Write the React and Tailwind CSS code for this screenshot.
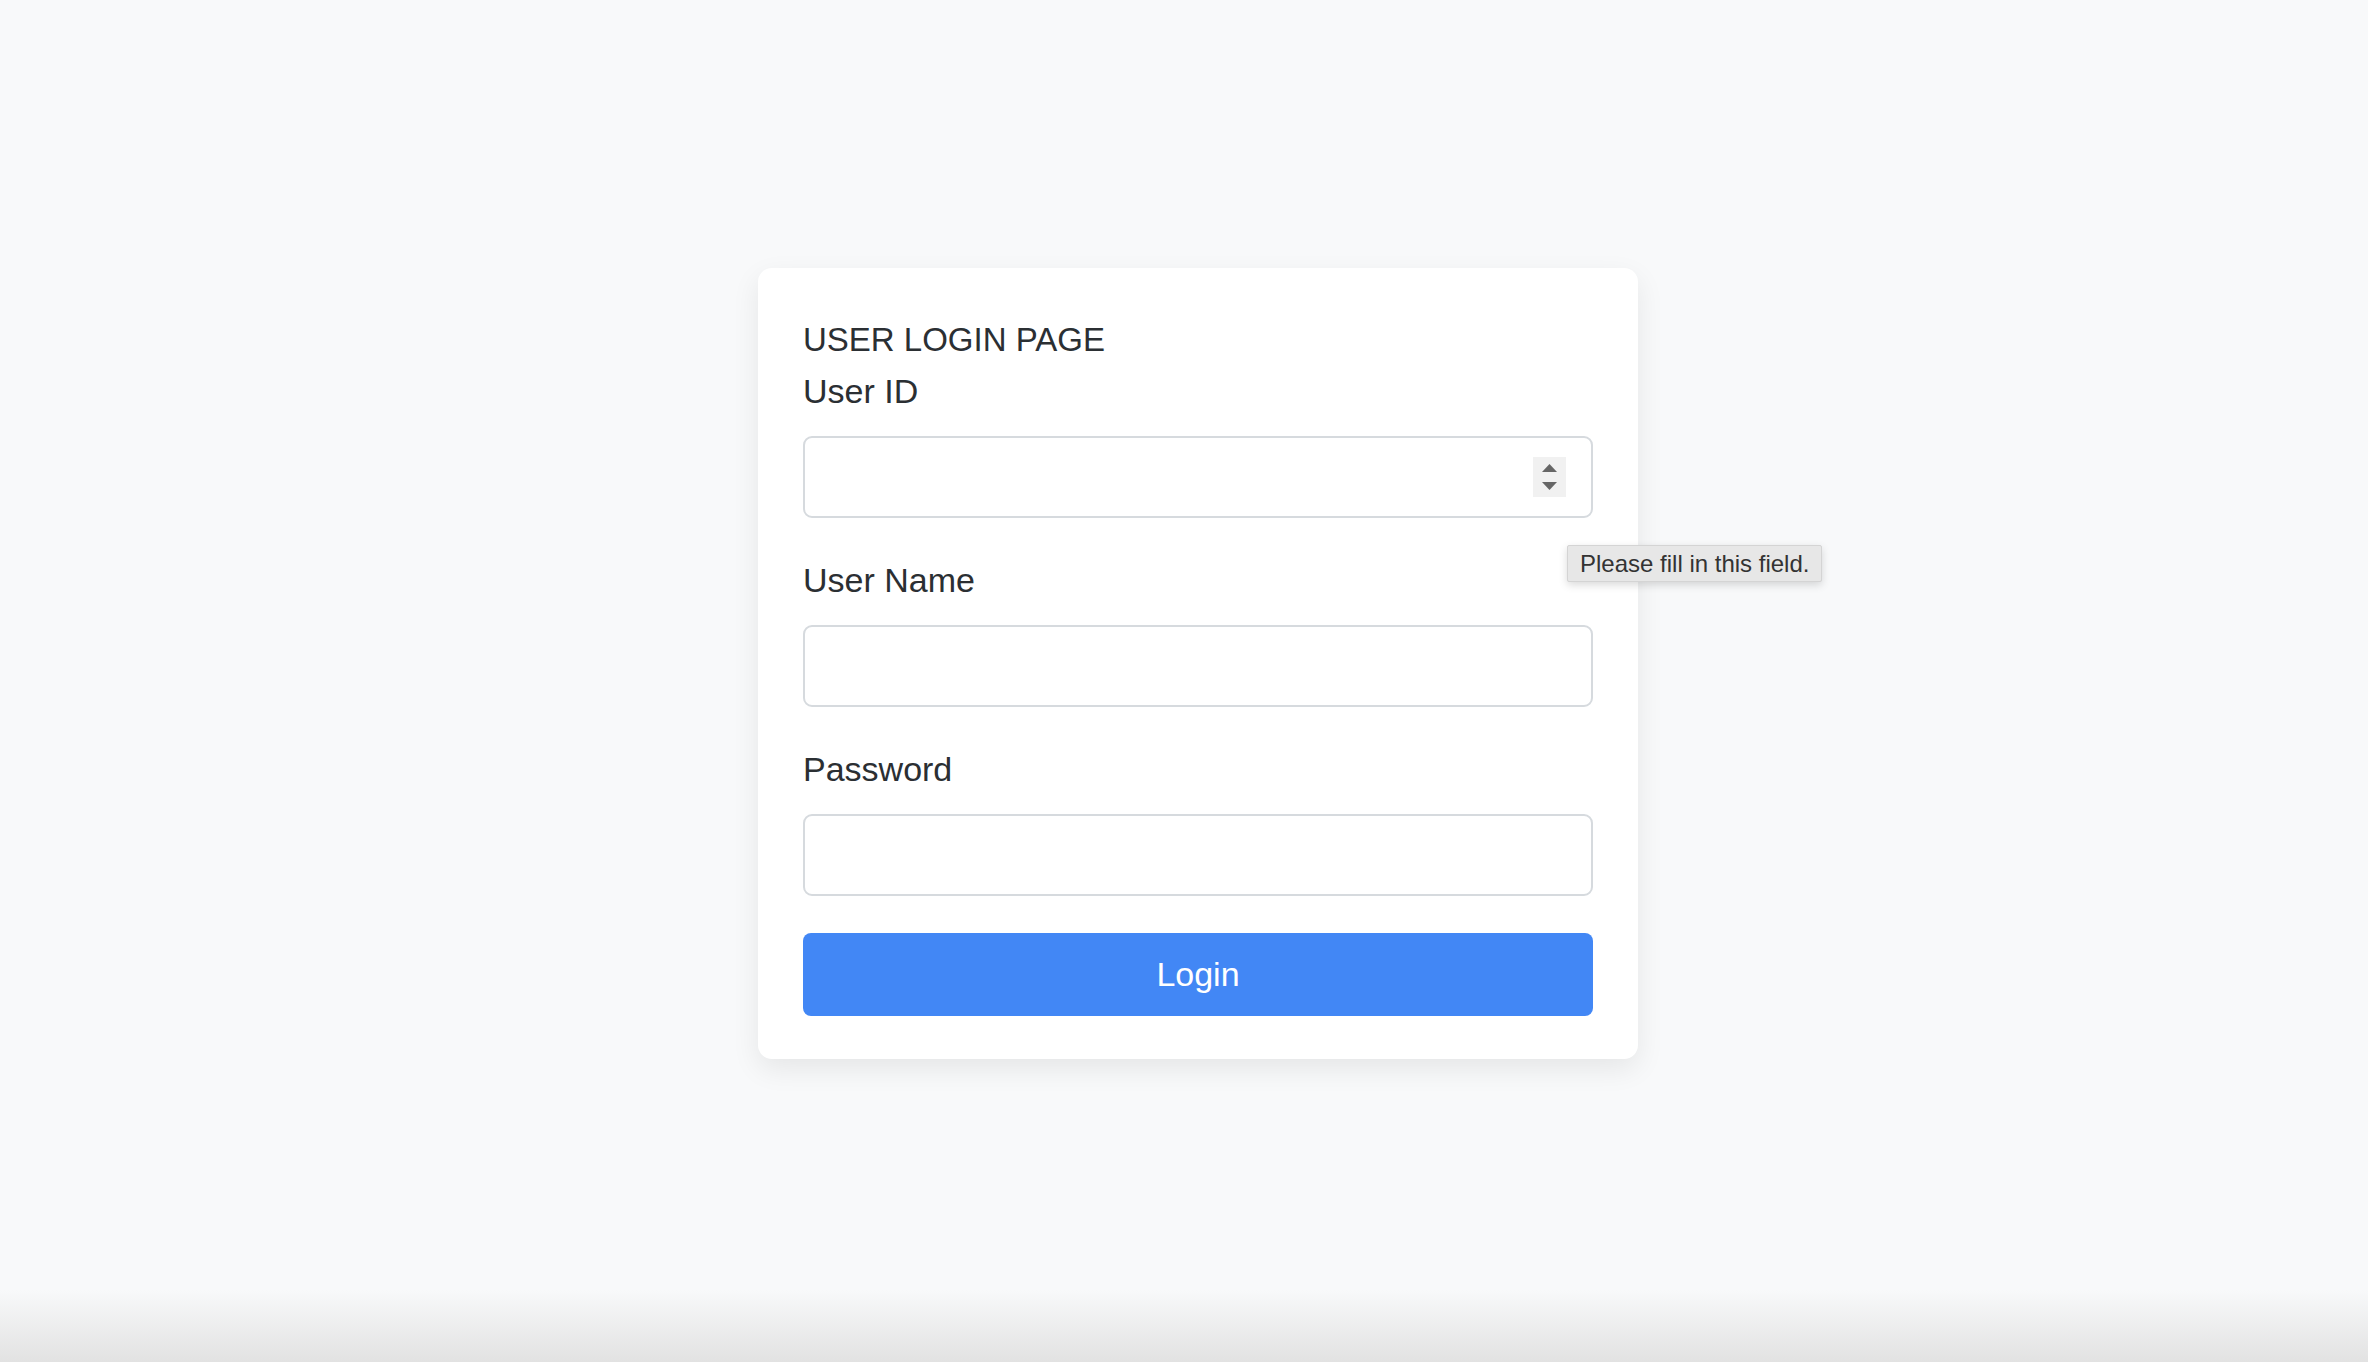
import React, { useState } from 'react';

const fields = [
  { id: 'userId', label: 'User ID', type: 'text' },
  { id: 'userName', label: 'User Name', type: 'text' },
  { id: 'password', label: 'Password', type: 'password' },
];

const App = () => {
  const [values, setValues] = useState({ userId: '', userName: '', password: '' });

  return (
    <div
      className="relative h-screen w-full overflow-hidden bg-[#f8f9fa] text-[#2b2f33]"
      style={{ fontFamily: '"Liberation Sans", Arial, sans-serif' }}
    >
      <div className="flex justify-center pl-[28px] pt-[268px]">
        <div className="w-[880px] rounded-[14px] bg-white px-[45px] pt-[52px] pb-[43px] shadow-[0_10px_28px_rgba(0,0,0,0.08)]">
          <h1 className="mb-[11px] text-[33px] leading-[40px] font-normal">USER LOGIN PAGE</h1>

          <form className="flex flex-col gap-[42px]" onSubmit={(e) => e.preventDefault()}>
            {fields.map((f) => (
              <div key={f.id} className="flex flex-col">
                <label htmlFor={f.id} className="mb-[25px] text-[34px] leading-[40px]">
                  {f.label}
                </label>
                <div className="relative">
                  <input
                    id={f.id}
                    type={f.type}
                    value={values[f.id]}
                    onChange={(e) => setValues({ ...values, [f.id]: e.target.value })}
                    className="block h-[82px] w-full rounded-[9px] border-2 border-[#d6dade] bg-white px-5 text-[34px] outline-none"
                  />
                  {f.id === 'userId' && (
                    <>
                      {/* number spinner */}
                      <div className="absolute right-[27px] top-[21px] h-[40px] w-[33px] bg-[#f1f1f1]">
                        <svg width="33" height="40" viewBox="0 0 33 40">
                          <polygon points="9,15 24,15 16.5,7" fill="#666" />
                          <polygon points="9,25 24,25 16.5,33" fill="#666" />
                        </svg>
                      </div>
                      {/* validation tooltip */}
                      <div className="absolute left-[764px] top-[109px] z-10 flex h-[37px] w-[255px] items-center whitespace-nowrap rounded-[2px] border border-[#d4d4d4] bg-[#e7e7e7] pl-[12px] text-[24px] text-[#333] shadow-[0_3px_8px_rgba(0,0,0,0.15)]">
                        Please fill in this field.
                      </div>
                    </>
                  )}
                </div>
              </div>
            ))}
          </form>

          <button
            type="button"
            className="mt-[37px] block h-[83px] w-full rounded-[8px] bg-[#4287f5] text-[34px] text-white"
          >
            Login
          </button>
        </div>
      </div>

      {/* bottom fade */}
      <div className="pointer-events-none absolute inset-x-0 bottom-0 h-[72px] bg-linear-to-b from-transparent to-[#e2e2e2]" />
    </div>
  );
};

export default App;
